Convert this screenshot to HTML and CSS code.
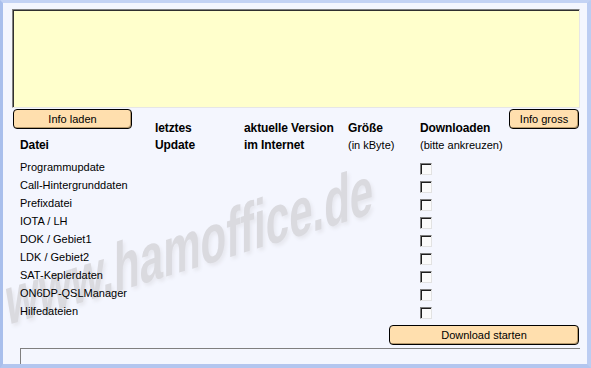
FILE: index.html
```html
<!DOCTYPE html>
<html lang="de">
<head>
<meta charset="utf-8">
<title>Update</title>
<link rel="stylesheet" href="styles.css">
</head>
<body>
<div class="window">
  <div class="watermark">www.hamoffice.de</div>
  <div class="info"></div>
  <div class="toolbar">
    <button class="btn btn-laden">Info laden</button>
    <button class="btn btn-gross">Info gross</button>
  </div>
  <div class="header">
    <div class="col col-datei"><b>Datei</b></div>
    <div class="col"><b>letztes<br>Update</b></div>
    <div class="col"><b>aktuelle Version<br>im Internet</b></div>
    <div class="col"><b>Größe</b><br><span class="sub">(in kByte)</span></div>
    <div class="col"><b>Downloaden</b><br><span class="sub">(bitte ankreuzen)</span></div>
  </div>
  <div class="rows">
    <div class="name">Programmupdate</div><span class="check"></span>
    <div class="name">Call-Hintergrunddaten</div><span class="check"></span>
    <div class="name">Prefixdatei</div><span class="check"></span>
    <div class="name">IOTA / LH</div><span class="check"></span>
    <div class="name">DOK / Gebiet1</div><span class="check"></span>
    <div class="name">LDK / Gebiet2</div><span class="check"></span>
    <div class="name">SAT-Keplerdaten</div><span class="check"></span>
    <div class="name">ON6DP-QSLManager</div><span class="check"></span>
    <div class="name">Hilfedateien</div><span class="check"></span>
  </div>
  <div class="actions">
    <button class="btn btn-download">Download starten</button>
  </div>
  <div class="status"></div>
</div>
</body>
</html>
```
FILE: styles.css
```css
html, body {
  margin: 0;
  padding: 0;
  background: #f4f6fe;
}
body {
  font-family: "Liberation Sans", Arial, sans-serif;
  font-size: 11px;
  color: #000;
}
.window {
  position: relative;
  z-index: 0;
  box-sizing: border-box;
  width: 591px;
  height: 368px;
  background: #f4f6fe;
  border-style: solid;
  border-width: 3px 4px 4px 3px;
  border-color: #c4d3f4 #bccdf2 #b3c6ef #a9bfec;
  display: flex;
  flex-direction: column;
}
.watermark {
  position: absolute;
  z-index: -1;
  left: 3px;
  top: 292px;
  height: 42px;
  line-height: 42px;
  font-size: 42px;
  font-weight: bold;
  font-family: "Liberation Sans", Arial, sans-serif;
  white-space: nowrap;
  color: #dadadf;
  text-shadow: 2px 2px 3px #e6e7ee;
  transform-origin: 0 100%;
  transform: skewY(-17deg) scaleY(1.65);
}
.info {
  box-sizing: border-box;
  margin: 6px 0 0 9px;
  width: 568px;
  height: 99px;
  flex: none;
  background: #ffffcc;
  border-style: solid;
  border-width: 1px;
  border-color: #808080 #e6e6e6 #e6e6e6 #808080;
  box-shadow: inset 1px 1px 0 #303030;
}
.toolbar {
  display: flex;
  justify-content: space-between;
  margin: 1px 8px 0 10px;
  flex: none;
}
.btn {
  box-sizing: border-box;
  height: 20px;
  padding: 0;
  margin: 0;
  font-family: "Liberation Sans", Arial, sans-serif;
  font-size: 11px;
  color: #000;
  background: #ffdfae;
  border: 1px solid #000;
  border-radius: 4px;
  box-shadow: inset -1px -1px 0 #b89a6c;
  text-align: center;
  line-height: 17px;
}
.btn-laden { width: 119px; }
.btn-gross { width: 70px; }
.btn-download { width: 190px; }
.header {
  display: grid;
  grid-template-columns: 135px 89px 104px 72px auto;
  margin-top: -9px;
  padding-left: 17px;
  line-height: 17px;
  flex: none;
}
.header b {
  font-size: 12px;
  letter-spacing: -0.1px;
}
.col-datei {
  align-self: end;
}
.sub {
  font-size: 11px;
}
.rows {
  display: grid;
  grid-template-columns: 400px 12px;
  grid-auto-rows: 18px;
  margin-top: 4px;
  padding-left: 17px;
  line-height: 18px;
  flex: none;
}
.name {
  white-space: nowrap;
}
.check {
  box-sizing: border-box;
  width: 12px;
  height: 12px;
  margin-top: 5px;
  background: #fbfbfb;
  border-style: solid;
  border-width: 1px;
  border-color: #7c7c7c #e2e2e2 #e2e2e2 #7c7c7c;
  box-shadow: inset 1px 1px 0 #1e1e1e;
}
.actions {
  display: flex;
  justify-content: flex-end;
  margin: 5px 8px 0 0;
  flex: none;
}
.status {
  margin: 3px 7px 0 17px;
  flex: 1;
  border-top: 1px solid #7f7f7f;
  border-left: 1px solid #7f7f7f;
}
```
